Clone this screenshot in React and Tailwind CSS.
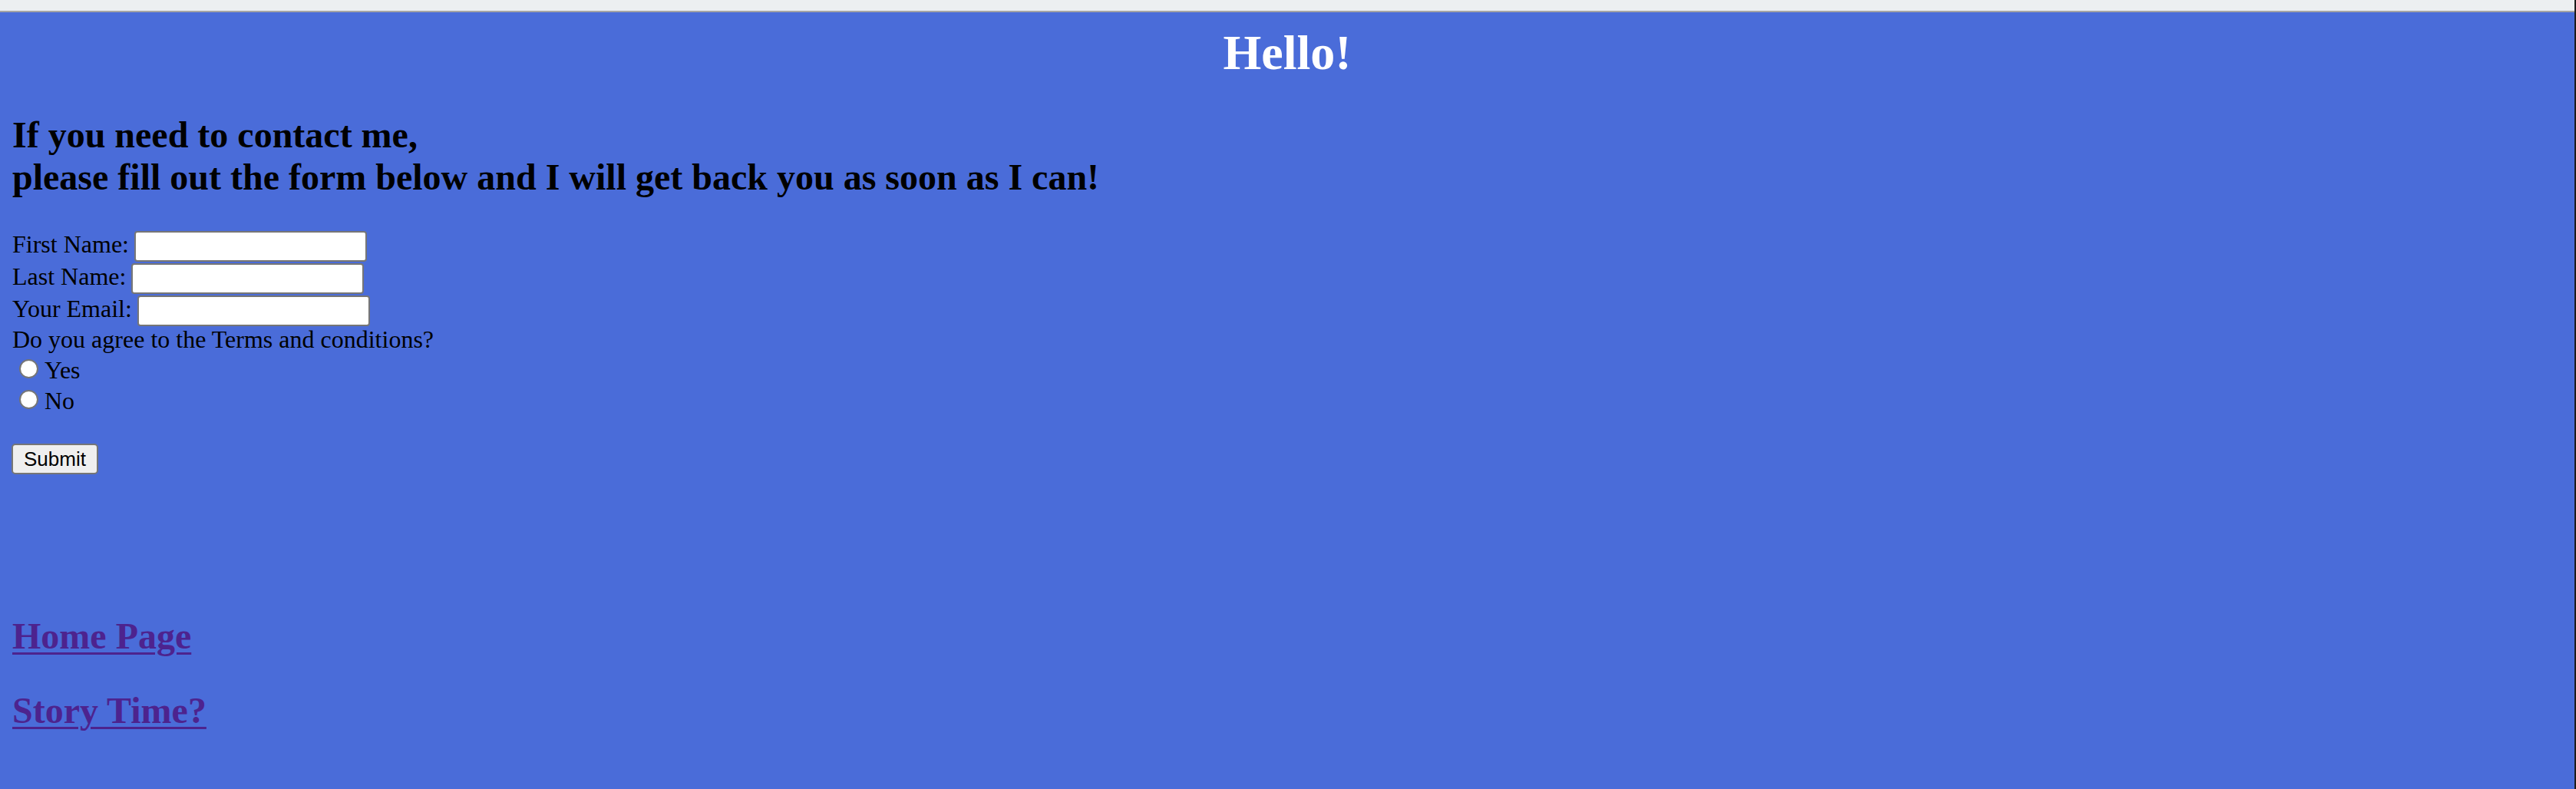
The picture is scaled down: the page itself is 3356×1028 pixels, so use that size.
import React, { useState } from 'react';

const serif = "font-['Liberation_Serif','Times_New_Roman',serif]";

const FieldRow = ({ label, id, type = 'text', value, onChange, last }) => (
  <div className={`flex items-start gap-[7px] ${last ? 'h-[41px]' : 'h-[42px]'}`}>
    <label htmlFor={id} className="pt-[1px] leading-[37px] whitespace-nowrap">
      {label}
    </label>
    <input
      id={id}
      type={type}
      value={value}
      onChange={(e) => onChange(e.target.value)}
      className="mt-[2px] h-[40px] w-[303px] rounded-[4px] border-2 border-[#767676] bg-white px-[4px] text-[26px] font-['Liberation_Sans',sans-serif] outline-none"
    />
  </div>
);

const RadioRow = ({ label, value, checked, onChange }) => (
  <label className="flex h-[40px] items-start gap-[8px] pl-[9px]">
    <input
      type="radio"
      name="terms"
      value={value}
      checked={checked}
      onChange={() => onChange(value)}
      className="mt-[6px] h-[25px] w-[25px] appearance-none rounded-full border-2 border-[#767676] bg-white checked:border-[7px] checked:border-[#0a64d6]"
    />
    <span className="leading-[40px]">{label}</span>
  </label>
);

const App = () => {
  const [firstName, setFirstName] = useState('');
  const [lastName, setLastName] = useState('');
  const [email, setEmail] = useState('');
  const [agree, setAgree] = useState('');

  const handleSubmit = (e) => {
    e.preventDefault();
  };

  return (
    <div className={`flex h-[1028px] w-full flex-col overflow-hidden border-r-2 border-[#1b1b1b] ${serif}`}>
      {/* window chrome strip */}
      <div className="h-[14px] shrink-0 bg-[#eceff1]" />
      <div className="h-[2px] shrink-0 bg-[#a5a5a5]" />

      <div className="flex-1 bg-[#4a6cd9] px-[16px] text-[32px] text-black">
        <h1 className="mt-[16px] text-center text-[64px] font-bold leading-[74px] text-white">Hello!</h1>

        <h2 className="mt-[42px] text-[48px] font-bold leading-[55px]">
          If you need to contact me,
          <br />
          please fill out the form below and I will get back you as soon as I can!
        </h2>

        <form onSubmit={handleSubmit} className="mt-[41px]">
          <FieldRow label="First Name:" id="firstName" value={firstName} onChange={setFirstName} />
          <FieldRow label="Last Name:" id="lastName" value={lastName} onChange={setLastName} />
          <FieldRow label="Your Email:" id="email" type="email" value={email} onChange={setEmail} last />

          <div className="leading-[37px]">Do you agree to the Terms and conditions?</div>
          <div className="mt-[1px]">
            <RadioRow label="Yes" value="yes" checked={agree === 'yes'} onChange={setAgree} />
            <RadioRow label="No" value="no" checked={agree === 'no'} onChange={setAgree} />
          </div>

          <button
            type="submit"
            className="mt-[36px] -ml-[1px] h-[40px] rounded-[5px] border-2 border-[#767676] bg-[#efefef] px-[14px] font-['Liberation_Sans',Arial,sans-serif] text-[26px] leading-[36px] text-black"
          >
            Submit
          </button>
        </form>

        <h2 className="mt-[181px] text-[48px] font-bold leading-[55px]">
          <a href="#home" className="text-[#4d238e] underline decoration-[3px] underline-offset-[5px]">
            Home Page
          </a>
        </h2>
        <h2 className="mt-[42px] text-[48px] font-bold leading-[55px]">
          <a href="#story" className="text-[#4d238e] underline decoration-[3px] underline-offset-[5px]">
            Story Time?
          </a>
        </h2>
      </div>
    </div>
  );
};

export default App;
